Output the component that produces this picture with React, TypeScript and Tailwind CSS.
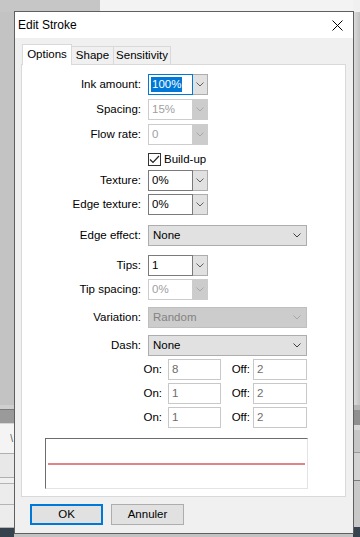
import type { ReactNode } from 'react';

const FONT = { fontFamily: '"Liberation Sans", Arial, sans-serif' };

function Chevron({ color = '#606060' }: { color?: string }) {
  return (
    <svg width="8" height="5" viewBox="0 0 8 5">
      <path d="M0.5 0.5 L4 4 L7.5 0.5" fill="none" stroke={color} strokeWidth="1" />
    </svg>
  );
}

type State = 'focus' | 'normal' | 'disabled';

function Combo({ value, state }: { value: string; state: State }) {
  const box =
    state === 'focus'
      ? 'border-[#0078d7] text-white'
      : state === 'disabled'
        ? 'border-[#cccccc] text-[#a0a0a0]'
        : 'border-[#7a7a7a] text-black';
  const btn =
    state === 'disabled' ? 'bg-[#cccccc] border-[#cccccc]' : 'bg-[#e1e1e1] border-[#adadad]';
  return (
    <div className="flex h-[21px]">
      <div className={`w-[45px] h-full border bg-white flex items-center pl-[2px] ${box}`}>
        {state === 'focus' ? (
          <span className="bg-[#0078d7] px-[1px] leading-[15px]">{value}</span>
        ) : (
          <span className="pl-[1px]">{value}</span>
        )}
      </div>
      <div className={`w-[15px] h-full border border-l-0 flex items-center justify-center ${btn}`}>
        <Chevron color={state === 'disabled' ? '#a8a8a8' : '#606060'} />
      </div>
    </div>
  );
}

function Select({ value, disabled }: { value: string; disabled?: boolean }) {
  return (
    <div
      className={`w-[159px] h-[21px] border flex items-center justify-between pl-[4px] pr-[5px] ${
        disabled ? 'bg-[#cccccc] border-[#bfbfbf] text-[#838383]' : 'bg-[#e1e1e1] border-[#adadad] text-black'
      }`}
    >
      <span>{value}</span>
      <Chevron color={disabled ? '#a8a8a8' : '#404040'} />
    </div>
  );
}

function Row({ label, mt, children }: { label: string; mt: string; children: ReactNode }) {
  return (
    <div className={`flex items-center ${mt}`}>
      <div className="w-[120px] text-right pr-[1px]">{label}</div>
      <div className="ml-[6px]">{children}</div>
    </div>
  );
}

function NumBox({ value, w }: { value: string; w: string }) {
  return (
    <div className={`${w} h-[21px] border border-[#c8c8c8] bg-white text-[#6d6d6d] flex items-center pl-[3px]`}>
      {value}
    </div>
  );
}

function OnOff({ on, off, mt }: { on: string; off: string; mt: string }) {
  return (
    <div className={`flex items-center ${mt}`}>
      <div className="w-[140px] text-right">On:</div>
      <div className="ml-[6px]">
        <NumBox value={on} w="w-[53px]" />
      </div>
      <div className="w-[29px] text-right">Off:</div>
      <div className="ml-[3px]">
        <NumBox value={off} w="w-[54px]" />
      </div>
    </div>
  );
}

export default function App() {
  return (
    <div className="relative w-[360px] h-[537px] overflow-hidden bg-[#c3c3c3] text-[11.5px]" style={FONT}>
      {/* background application */}
      <div className="flex h-[12px]">
        <div className="w-[100px] bg-[#c6c6c6]" />
        <div className="flex-1 bg-[#f3f3f3]" />
      </div>
      <div className="absolute left-0 top-[405px] w-[14px] h-[132px] flex flex-col">
        <div className="h-[4px] bg-[#cfcfcf]" />
        <div className="h-[1px] bg-[#7a7a7a]" />
        <div className="h-[13px] bg-[#9a9a9a]" />
        <div className="h-[1px] bg-[#d6d6d6]" />
        <div className="h-[29px] bg-[#f4f4f4] flex items-center justify-end pr-[1px] text-[#555] text-[10px]">\</div>
        <div className="h-[25px] bg-[#e8e8e8] border-y border-[#b0b0b0] border-r-0" />
        <div className="h-[5px] bg-[#f0f0f0]" />
        <div className="h-[22px] bg-[#ececec] border-y border-[#b4b4b4]" />
        <div className="h-[23px] bg-[#ececec] border-b border-[#b4b4b4]" />
        <div className="flex-1 bg-[#36424d]" />
      </div>
      <div className="absolute right-0 top-0 w-[7px] h-[537px] flex flex-col">
        <div className="h-[12px] bg-[#f0f0f0]" />
        <div className="h-[393px] bg-gradient-to-r from-[#dedede] to-[#c2c2c2]" />
        <div className="h-[5px] bg-[#b4b4b4]" />
        <div className="h-[15px] bg-[#8f8f8f]" />
        <div className="h-[5px] bg-[#d8d8d8]" />
        <div className="h-[23px] bg-[#c6c6c6] border-b border-[#9a9a9a]" />
        <div className="h-[28px] bg-[#d2d2d2] border-b border-[#7c7c7c]" />
        <div className="h-[46px] bg-[#c8c8c8]" />
        <div className="flex-1 bg-[#36424d]" />
      </div>

      {/* dialog window */}
      <div className="absolute left-[14px] top-[11px] w-[340px] h-[523px] border border-[#5f5f5f] bg-[#f0f0f0] flex flex-col">
        <div className="h-[26px] bg-white flex items-center justify-between pl-[3px] pr-[10px] text-[12px]">
          <span className="text-black">Edit Stroke</span>
          <svg width="11" height="11" viewBox="0 0 11 11">
            <path d="M0.5 0.5 L10.5 10.5 M10.5 0.5 L0.5 10.5" stroke="#000" strokeWidth="1" />
          </svg>
        </div>

        <div className="ml-[6px] mr-[7px] mt-[6px]">
          <div className="flex items-end h-[21px] -mb-px ml-px relative z-10">
            <div className="w-[50px] h-[21px] bg-white border border-b-0 border-[#d9d9d9] flex items-center justify-center pb-[1px]">
              Options
            </div>
            <div className="w-[42px] h-[18px] mb-px bg-[#f0f0f0] border border-l-0 border-b-0 border-[#d9d9d9] flex items-center justify-center">
              Shape
            </div>
            <div className="w-[57px] h-[18px] mb-px bg-[#f0f0f0] border border-l-0 border-b-0 border-[#d9d9d9] flex items-center justify-center">
              Sensitivity
            </div>
          </div>

          <div className="h-[433px] bg-white border border-[#d9d9d9] flex flex-col pt-[9px] text-black">
            <Row label="Ink amount:" mt="mt-0">
              <Combo value="100%" state="focus" />
            </Row>
            <Row label="Spacing:" mt="mt-[4px]">
              <Combo value="15%" state="disabled" />
            </Row>
            <Row label="Flow rate:" mt="mt-[4px]">
              <Combo value="0" state="disabled" />
            </Row>
            <div className="flex items-center h-[15px] mt-[7px] ml-[126px]">
              <div className="w-[13px] h-[13px] border border-[#333] bg-white flex items-center justify-center">
                <svg width="11" height="9" viewBox="0 0 11 9">
                  <path d="M1 4.5 L4 7.5 L10 1" fill="none" stroke="#222" strokeWidth="1.2" />
                </svg>
              </div>
              <span className="ml-[3px]">Build-up</span>
            </div>
            <Row label="Texture:" mt="mt-[3px]">
              <Combo value="0%" state="normal" />
            </Row>
            <Row label="Edge texture:" mt="mt-[3px]">
              <Combo value="0%" state="normal" />
            </Row>
            <Row label="Edge effect:" mt="mt-[10px]">
              <Select value="None" />
            </Row>
            <Row label="Tips:" mt="mt-[9px]">
              <Combo value="1" state="normal" />
            </Row>
            <Row label="Tip spacing:" mt="mt-[3px]">
              <Combo value="0%" state="disabled" />
            </Row>
            <Row label="Variation:" mt="mt-[7px]">
              <Select value="Random" disabled />
            </Row>
            <Row label="Dash:" mt="mt-[7px]">
              <Select value="None" />
            </Row>
            <OnOff on="8" off="2" mt="mt-[3px]" />
            <OnOff on="1" off="2" mt="mt-[3px]" />
            <OnOff on="1" off="2" mt="mt-[3px]" />

            <div className="ml-[23px] mt-[10px] w-[263px] h-[51px] bg-white border border-t-[#6d6d6d] border-l-[#6d6d6d] border-r-[#e3e3e3] border-b-[#e3e3e3] flex items-center px-[2px]">
              <div className="w-full h-[2px] bg-[#e08585]" />
            </div>
          </div>
        </div>

        <div className="flex mt-[7px] ml-[15px] gap-[8px]">
          <div className="w-[73px] h-[21px] bg-[#e1e1e1] border-2 border-[#0078d7] flex items-center justify-center">
            OK
          </div>
          <div className="w-[73px] h-[21px] bg-[#e1e1e1] border border-[#adadad] flex items-center justify-center">
            Annuler
          </div>
        </div>
      </div>
    </div>
  );
}
